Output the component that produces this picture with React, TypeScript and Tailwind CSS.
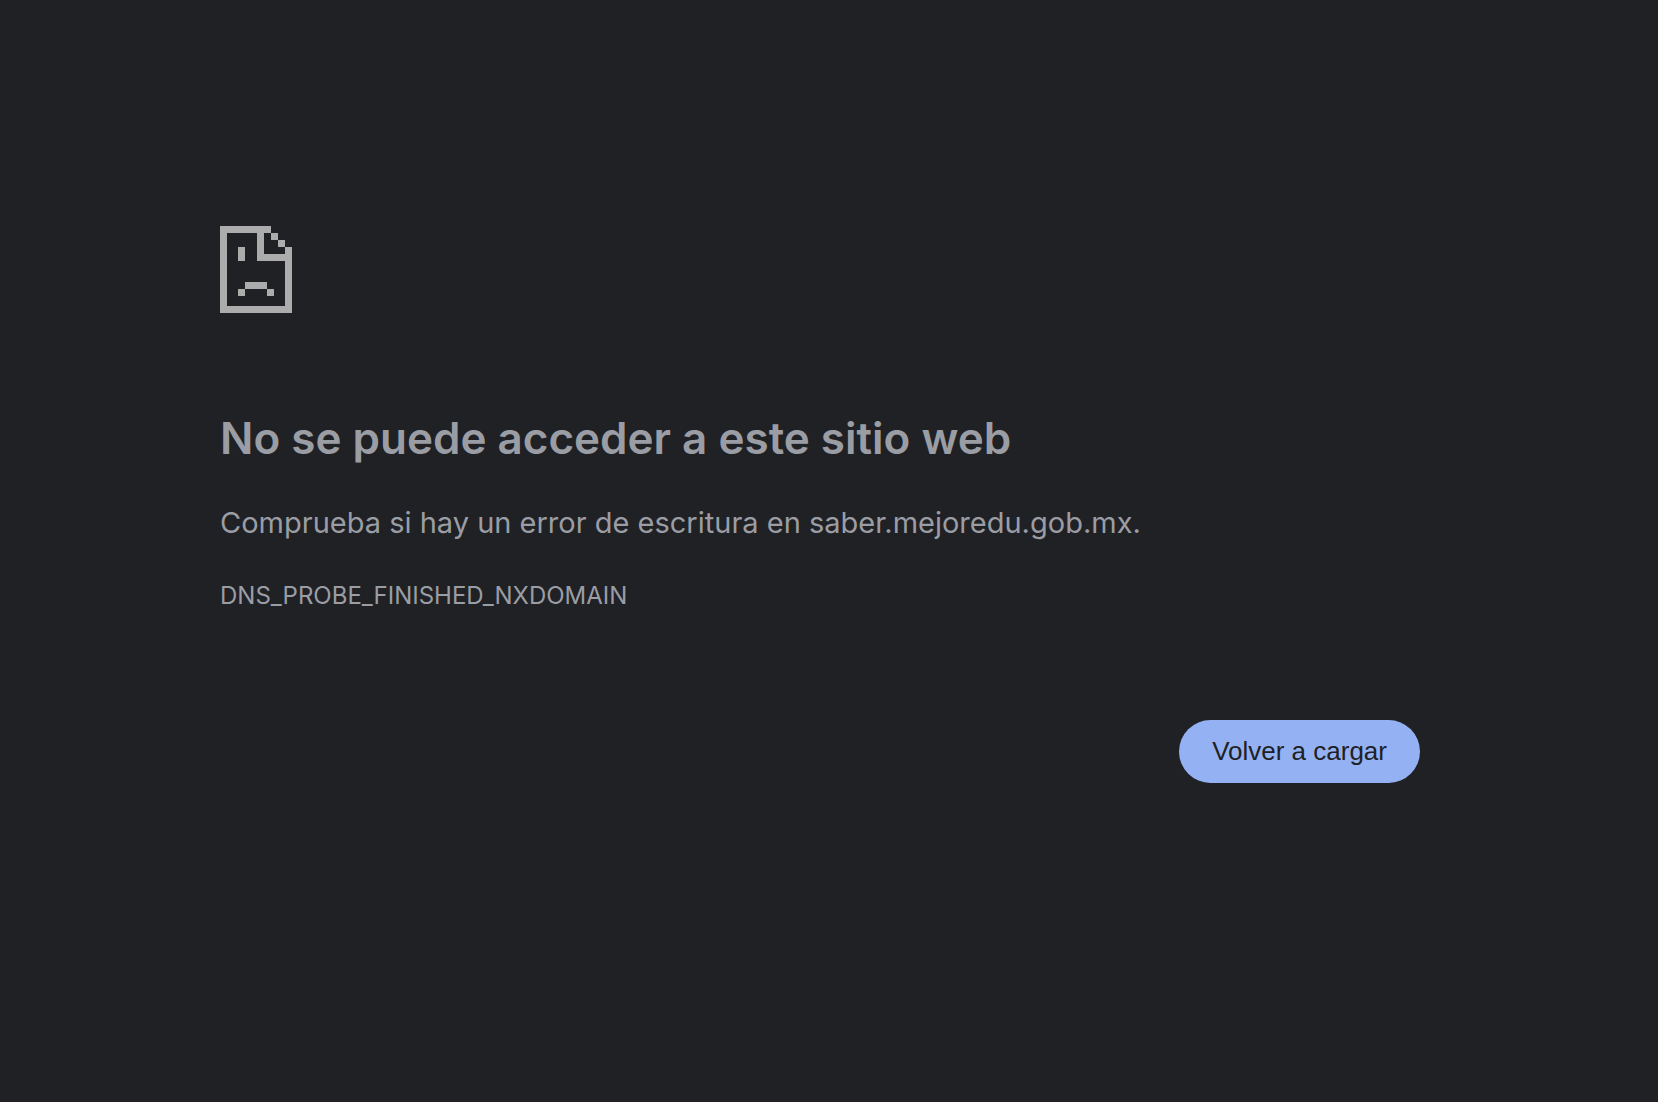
function SadPageIcon() {
  return (
    <svg
      className="block h-[87px] w-[72px]"
      viewBox="0 0 72 87"
      fill="#acacac"
      shapeRendering="crispEdges"
      aria-hidden="true"
    >
      <path d="M0 0H51V7H44V28H65V21H72V87H0ZM7 7V80H65V35H37V7Z" fillRule="evenodd" />
      <path d="M51 7h7v7h-7ZM58 14h7v7h-7Z" />
      <path d="M18 21h7v14h-7Z" />
      <path d="M25 56h22v7h-22ZM18 63h7v7h-7ZM47 63h7v7h-7Z" />
    </svg>
  );
}

export default function App() {
  return (
    <div className="min-h-screen border-b border-[#281d22] bg-[#202124] pr-[18px] font-['Inter',sans-serif] text-[#9b9da4]">
      <main className="mx-auto max-w-[1200px] pt-[226px]">
        <SadPageIcon />
        <h1 className="mt-24 text-[44px] leading-[58px] font-semibold">
          No se puede acceder a este sitio web
        </h1>
        <p className="mt-8 text-[29px] leading-[47px]">
          Comprueba si hay un error de escritura en saber.mejoredu.gob.mx.
        </p>
        <p className="mt-8 text-[24px] leading-9">DNS_PROBE_FINISHED_NXDOMAIN</p>
        <div className="mt-[106px] flex justify-end">
          <button
            type="button"
            className="rounded-full bg-[#94b2f3] px-[33px] py-4 font-['Liberation_Sans',Arial,sans-serif] text-[26px] leading-[31px] text-[#202124]"
          >
            Volver a cargar
          </button>
        </div>
      </main>
    </div>
  );
}
